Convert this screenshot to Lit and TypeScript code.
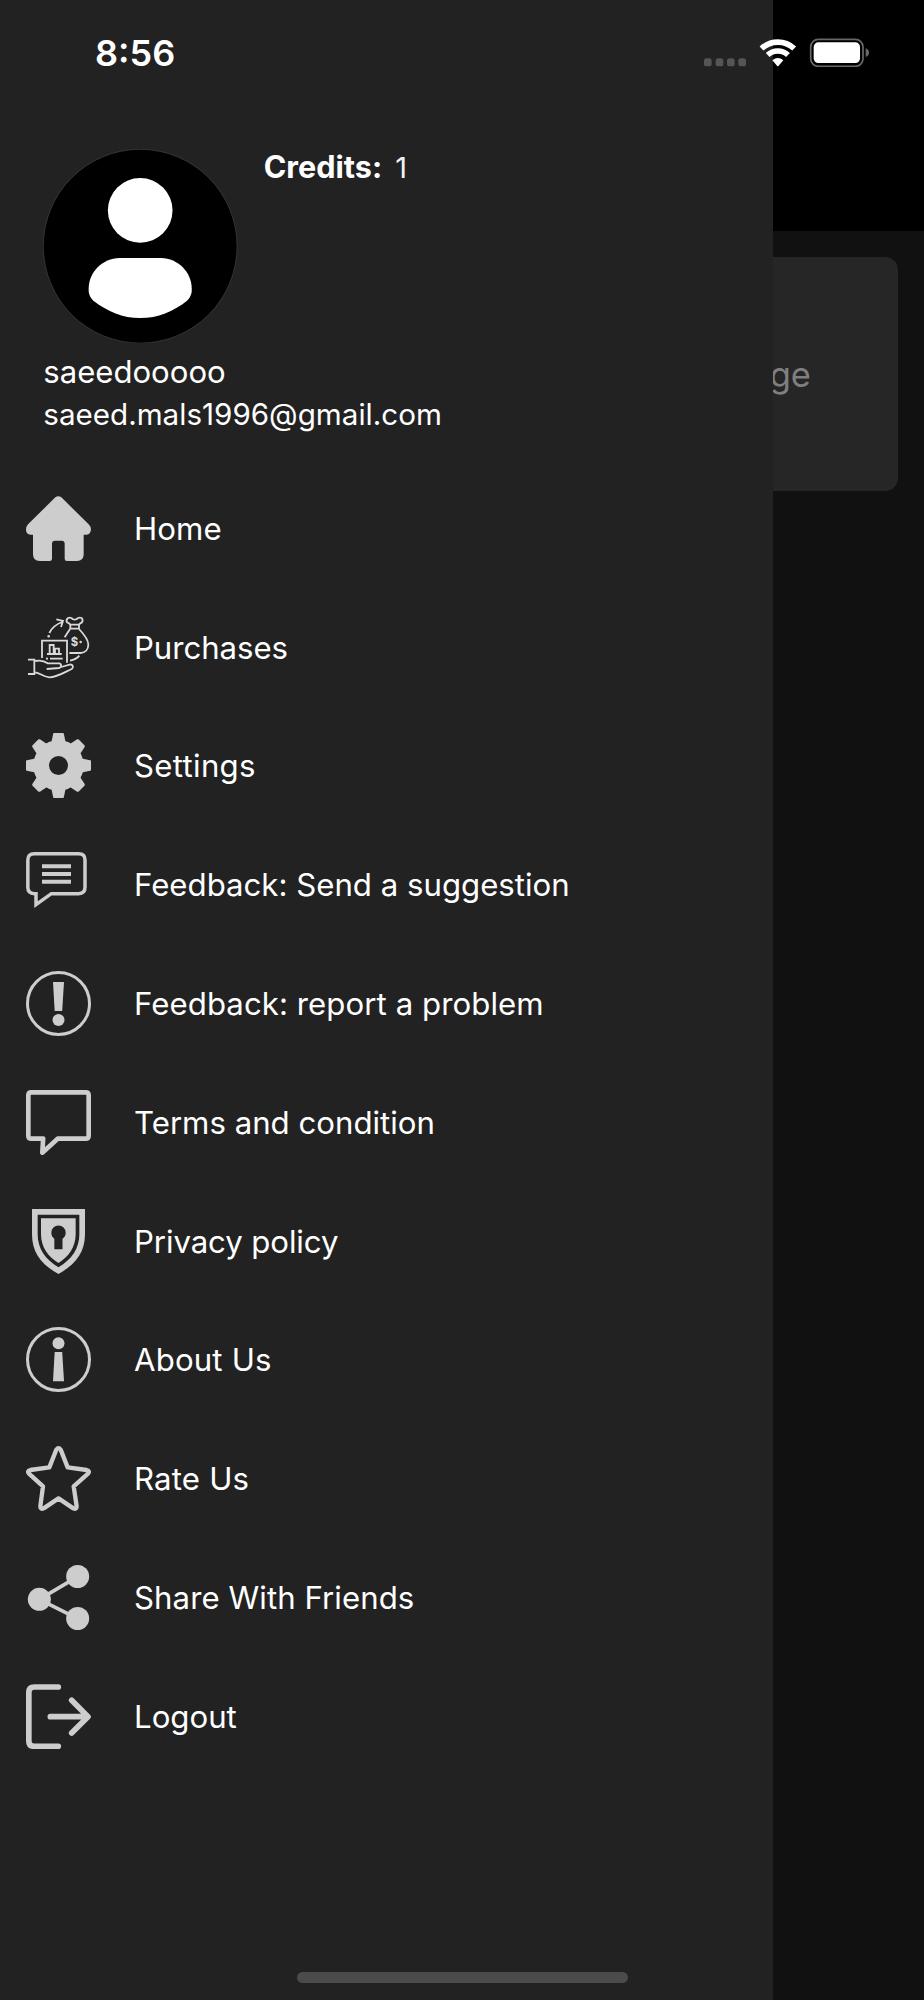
import { LitElement, html, svg, css } from "lit";
import { customElement } from "lit/decorators.js";

const tooth = "M-22 -66L-16 -95Q-15 -98 -12 -98H12Q15 -98 16 -95L22 -66Z";

const ICONS: Record<string, unknown> = {
  home: svg`<svg viewBox="48 47 195 195"><path fill="currentColor" d="M136 51Q145 44 154 51L236 132Q243 139 243 148Q241 163 228 163H221V222Q221 242 201 242H171Q164 242 164 235V190Q164 181 155 181H135Q126 181 126 190V235Q126 242 119 242H89Q69 242 69 222V163H62Q48 161 48 148Q48 139 54 132Z"/></svg>`,
  purchases: svg`<svg viewBox="48 404 195 195"><g fill="none" stroke="#dadada" stroke-width="5.400">
    <path d="M118 458Q129 435 157 425M139 417L159 422L153 440"/>
    <path d="M181 433Q178 428 171 426Q167 418 174 413Q182 410 188 416Q194 420 200 416Q206 410 215 413Q220 419 216 426Q209 429 207 433V445H181V433H207"/>
    <path d="M180 446L164 471M207 446C225 465 235 480 235 493C235 508 225 517 212 518H178"/>
    <path d="M96 533V481H171V547M111 521H155M119 521V494H131V521M135 521V505H147V521M120 535H158"/>
    <path d="M208 526Q198 538 180 541"/>
    <path d="M54 538H73V581H54M76 542C95 538 105 543 113 549H148C156 551 154 562 147 563L110 566M154 560L181 552C190 553 191 562 185 566C160 578 140 591 118 591C100 590 90 578 76 576"/></g>
    <g fill="#dadada"><circle cx="116" cy="468" r="3.8"/><circle cx="111" cy="535" r="3.300"/><circle cx="212" cy="485" r="3.800"/><text x="182" y="497" font-size="34" font-weight="700" font-family="Inter, sans-serif">$</text></g></svg>`,
  settings: svg`<svg viewBox="48 41 195 195"><g transform="translate(145.5 138.5)" fill="currentColor">
    <circle r="52" fill="none" stroke="currentColor" stroke-width="47"/>
    ${[0, 45, 90, 135, 180, 225, 270, 315].map((a) => svg`<path d=${tooth} transform="rotate(${a})"/>`)}</g></svg>`,
  suggestion: svg`<svg viewBox="48 397 195 195"><g fill="none" stroke="currentColor" stroke-width="10.5"><path d="M73 402.500H206Q225 402.500 225 421V503Q225 522 206 522H124L78 555V522H73Q53.500 522 53.500 503V421Q53.500 402.500 73 402.500Z"/><path stroke-width="12" d="M96 440H183M96 463H183M96 486H183"/></g></svg>`,
  problem: svg`<svg viewBox="48 33 195 195"><circle cx="145.500" cy="130.500" r="93" fill="none" stroke="currentColor" stroke-width="9"/><path fill="currentColor" d="M129 66H162L156.500 153H134Z"/><circle cx="145.500" cy="180" r="18" fill="currentColor"/></svg>`,
  terms: svg`<svg viewBox="48 390 195 195"><path fill="none" stroke="currentColor" stroke-width="14" stroke-linejoin="round" d="M64 397H227Q236 397 236 406V527Q236 536 227 536H143L97 578L99.500 536H64Q55 536 55 527V406Q55 397 64 397Z"/></svg>`,
  privacy: svg`<svg viewBox="48 41 195 195"><path fill="currentColor" fill-rule="evenodd" d="M66 41H225V117C225 170 198 207 145.500 236C92 207 66 170 66 117ZM83 58V117C83 160 106 193 145.500 216C185 193 208 160 208 117V58ZM93 69H197V117C197 155 175 186 145.500 203C115 186 93 155 93 117ZM133 162H157.500V130C164 126 167 119 167 112A21.500 21.500 0 1 0 124 112C124 119 127 126 133 130Z"/></svg>`,
  about: svg`<svg viewBox="48 397 195 195"><circle cx="145.500" cy="494.500" r="93" fill="none" stroke="currentColor" stroke-width="9"/><path fill="currentColor" d="M134 472H156.500L162 560H129Z"/><circle cx="145.500" cy="445.500" r="18" fill="currentColor"/></svg>`,
  rate: svg`<svg viewBox="48 33 195 195"><path fill="none" stroke="currentColor" stroke-width="13" stroke-linejoin="round" d="M139 44Q145.500 35 152 44L173 97L230 105Q241 108 234 116L191 154L200 214Q200 224 190 220L145.500 190L101 220Q91 224 91 214L99 154L57 116Q50 108 61 105L118 97Z"/></svg>`,
  share: svg`<svg viewBox="48 390 195 195"><path stroke="currentColor" stroke-width="11" d="M203 425L88 493L203 551" fill="none"/><g fill="currentColor"><circle cx="203" cy="424.500" r="34.500"/><circle cx="88" cy="493" r="34.500"/><circle cx="203" cy="550.500" r="34.500"/></g></svg>`,
  logout: svg`<svg viewBox="48 41 195 195"><path fill="none" stroke="currentColor" stroke-width="17" stroke-linecap="round" stroke-linejoin="round" d="M145 50H73Q56.500 50 56.500 66V212Q56.500 228 73 228H145M121 139H232M185 90L234 139L185 188"/></svg>`,
};

// icon, label, tracking in px
const MENU: [string, string, number][] = [
  ["home", "Home", 0.1],
  ["purchases", "Purchases", -0.05],
  ["settings", "Settings", 0.3],
  ["suggestion", "Feedback: Send a suggestion", 0],
  ["problem", "Feedback: report a problem", 0.06],
  ["terms", "Terms and condition", 0],
  ["privacy", "Privacy policy", -0.1],
  ["about", "About Us", 0.15],
  ["rate", "Rate Us", 0.18],
  ["share", "Share With Friends", 0.06],
  ["logout", "Logout", 0],
];

@customElement("app-root")
export class AppRoot extends LitElement {
  static styles = css`
    :host { display: block; position: relative; width: 924px; height: 2000px; overflow: hidden; background: #111; color: #fff; font-family: Inter, "Liberation Sans", sans-serif; }
    svg { display: block; }
    .screen { display: grid; grid-template-columns: 772.67px 1fr; height: 2000px; }
    .drawer { background: #222; box-sizing: border-box; padding-top: 149px; }
    .profile { height: 320px; box-sizing: border-box; padding-left: 43.3px; }
    .top { display: flex; gap: 26px; height: 194.400px; }
    .avatar { width: 194.400px; height: 194.400px; }
    .credits { display: flex; align-items: baseline; height: 36px; line-height: 36px; font-size: 30.600px; font-weight: 700; white-space: pre; }
    .credits .count { font-weight: 400; font-size: 29px; margin-left: 13px; color: #f2f2f2; }
    .line { height: 40.400px; line-height: 40px; white-space: nowrap; }
    .name { margin-top: 9px; font-size: 31.100px; }
    .email { font-size: 29.600px; padding-top: 1px; }
    .row { display: flex; align-items: center; gap: 43px; height: 118.800px; padding-left: 26px; font-size: 31.200px; line-height: 40px; white-space: nowrap; }
    .label { padding-top: 1px; }
    .icon { width: 65px; height: 65px; color: #cdcdcd; }
    .page { overflow: hidden; }
    .bar { height: 231px; background: #000; }
    .card { margin: 26px 26px 0 0; height: 234px; border-radius: 0 13px 13px 0; background: #262626; color: #7f7f7f; display: flex; align-items: center; font-size: 34.500px; }
    .card span { margin-left: -3px; }
    .status { position: absolute; inset: 0 0 auto 0; height: 104px; display: flex; justify-content: space-between; align-items: center; padding: 0 54px 0 95px; }
    .time { font-size: 36px; font-weight: 600; line-height: 44px; padding-top: 2px; }
    .signals { width: 166.700px; height: 30.700px; }
    .indicator { position: absolute; left: 297px; bottom: 17px; width: 330.500px; height: 11px; border-radius: 6px; background: #4b4b4b; }
  `;

  render() {
    return html`
      <div class="screen">
        <nav class="drawer">
          <div class="profile">
            <div class="top">
              <svg class="avatar" viewBox="70 57 583 583"><circle cx="361.5" cy="348.500" r="290.500" fill="#000" stroke="#555" stroke-width="1.500"/><circle cx="361.5" cy="241" r="97" fill="#fff"/><path fill="#fff" d="M300 384H424C475 384 516 428 516 475V485Q514 500 502 512C460 545 415 564 361.500 564C308 564 265 545 221 512Q209 500 207 485V475C207 428 248 384 300 384Z"/></svg>
              <div class="credits"><span>Credits:</span><span class="count">1</span></div>
            </div>
            <div class="line name"><span>saeedooooo</span></div>
            <div class="line email"><span>saeed.mals1996@gmail.com</span></div>
          </div>
          ${MENU.map(([icon, label, tracking]) => html`<div class="row"><div class="icon">${ICONS[icon]}</div><span class="label" style="letter-spacing:${tracking}px">${label}</span></div>`)}
        </nav>
        <main class="page">
          <div class="bar"></div>
          <div class="card"><span>ge</span></div>
        </main>
      </div>
      <div class="status">
        <span class="time">8:56</span>
        <svg class="signals" viewBox="70 110 500 92">
          <g fill="#555"><rect x="73" y="174" width="23" height="24" rx="8"/><rect x="108" y="174" width="23" height="24" rx="8"/><rect x="142" y="174" width="23" height="24" rx="8"/><rect x="176" y="174" width="23" height="24" rx="8"/></g>
          <path fill="none" stroke="#fff" stroke-width="17" d="M245.500 144.500A72 72 0 0 1 343.500 144.500M264 164A45 45 0 0 1 325 164"/>
          <path fill="#fff" d="M278 180Q294.500 166 311 180L297 196Q294.500 199 292 196Z"/>
          <rect x="393" y="117" width="157" height="81" rx="23" fill="#000" stroke="#686868" stroke-width="5"/>
          <rect x="402" y="126" width="139" height="62" rx="14" fill="#fff"/>
          <path fill="#686868" d="M558 144Q568 148 568 157Q568 166 558 170Z"/>
        </svg>
      </div>
      <div class="indicator"></div>
    `;
  }
}
